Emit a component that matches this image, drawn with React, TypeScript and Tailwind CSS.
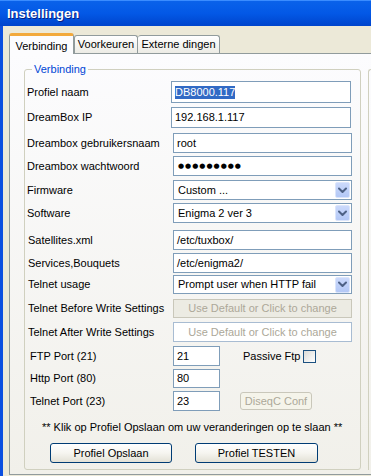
import type { ReactNode } from "react";

const FONT = "font-['Liberation_Sans',Arial,sans-serif]";

function Row({
  className,
  label,
  labelWidth = "w-[146px]",
  labelPad = "",
  children,
}: {
  className: string;
  label: string;
  labelWidth?: string;
  labelPad?: string;
  children: ReactNode;
}) {
  return (
    <div className={`flex items-center ${className}`}>
      <div className={`shrink-0 text-[11px] leading-none text-black ${labelWidth} ${labelPad}`}>
        {label}
      </div>
      {children}
    </div>
  );
}

function TextBox({ className, children }: { className: string; children?: ReactNode }) {
  return (
    <div
      className={`flex h-full items-center border border-[#7f9db9] bg-white pl-[3px] text-[11px] text-black ${className}`}
    >
      {children}
    </div>
  );
}

function Combo({ value }: { value: string }) {
  return (
    <div className="flex h-full w-[179px] items-center border border-[#7f9db9] bg-white pl-[4px] pr-[1px] text-[11px] text-black">
      <span className="flex-1">{value}</span>
      <span className="flex h-[16px] w-[15px] items-center justify-center rounded-[2px] border border-[#dbe5fb] bg-gradient-to-b from-[#cbd9fb] to-[#b3c8f6]">
        <ChevronIcon />
      </span>
    </div>
  );
}

function XpButton({ label, className }: { label: string; className: string }) {
  return (
    <button
      type="button"
      className={`flex h-[20px] items-center justify-center rounded-[3px] border border-[#003c74] bg-gradient-to-b from-white via-[#f6f5f0] to-[#e3e1d6] text-[11px] text-black ${className}`}
    >
      {label}
    </button>
  );
}

export default function App() {
  return (
    <div className={`h-[476px] w-[371px] overflow-hidden bg-[#ece9d8] ${FONT}`}>
      {/* title bar */}
      <div className="flex h-[26px] items-center border-t border-[#3a8cff] bg-gradient-to-b from-[#0a62ea] via-[#0358e6] to-[#0044cc] pl-[7px]">
        <span className="text-[13px] font-bold text-white [text-shadow:1px_1px_0_#0a1e80]">
          Instellingen
        </span>
      </div>

      <div className="flex h-[450px] border-l-[3px] border-[#0b4fe0]">
        <div className="flex flex-1 flex-col pl-[6px] pt-[7px]">
          {/* tabs */}
          <div className="relative z-10 flex h-[20px] items-end">
            <div className="-mb-px flex h-[21px] w-[65px] items-start justify-center rounded-t-[3px] border-x border-t-[3px] border-x-[#919b9c] border-t-[#f2a93c] bg-[#fcfcfe] pt-[2px] text-[11px] text-black">
              Verbinding
            </div>
            <div className="flex h-[18px] w-[64px] items-center justify-center rounded-t-[3px] border-x border-t border-[#919b9c] bg-gradient-to-b from-white to-[#ecebe5] text-[11px] text-black">
              Voorkeuren
            </div>
            <div className="flex h-[18px] w-[82px] items-center justify-center rounded-t-[3px] border-r border-t border-[#919b9c] bg-gradient-to-b from-white to-[#ecebe5] text-[11px] text-black">
              Externe dingen
            </div>
          </div>

          {/* tab page */}
          <div className="flex h-[422px] w-[420px] border border-[#919b9c] bg-gradient-to-b from-[#fcfcfe] to-[#f1f0ea] pb-[4px] pl-[14px] pt-[8px]">
            <fieldset className="h-[408px] w-[337px] shrink-0 rounded-[3px] border border-[#d0d0bf] pl-[2px] pr-[2px]">
              <legend className="ml-[5px] px-[2px] text-[11px] leading-[14px] text-[#0046d5]">
                Verbinding
              </legend>

              <Row className="mt-[5px] h-[22px]" label="Profiel naam" labelWidth="w-[144px]">
                <TextBox className="w-[180px]">
                  <span className="bg-[#316ac5] leading-[13px] text-white">DB8000.117</span>
                </TextBox>
              </Row>
              <Row className="mt-[4px] h-[21px]" label="DreamBox IP" labelWidth="w-[144px]">
                <TextBox className="w-[180px]">192.168.1.117</TextBox>
              </Row>
              <Row className="mt-[5px] h-[20px]" label="Dreambox gebruikersnaam">
                <TextBox className="w-[179px]">root</TextBox>
              </Row>
              <Row className="mt-[3px] h-[20px]" label="Dreambox wachtwoord">
                <TextBox className="w-[179px]">
                  <span className="pl-[1px] font-['DejaVu_Sans',sans-serif] text-[7px] tracking-[1px]">
                    ●●●●●●●●●
                  </span>
                </TextBox>
              </Row>
              <Row className="mt-[4px] h-[20px]" label="Firmware">
                <Combo value="Custom ..." />
              </Row>
              <Row className="mt-[3px] h-[20px]" label="Software">
                <Combo value="Enigma 2 ver 3" />
              </Row>
              <Row className="mt-[7px] h-[20px]" label="Satellites.xml" labelPad="pl-[1px]">
                <TextBox className="w-[179px]">/etc/tuxbox/</TextBox>
              </Row>
              <Row className="mt-[3px] h-[20px]" label="Services,Bouquets" labelPad="pl-[1px]">
                <TextBox className="w-[179px]">/etc/enigma2/</TextBox>
              </Row>
              <Row className="mt-[2px] h-[19px]" label="Telnet usage" labelPad="pl-[1px]">
                <Combo value="Prompt user when HTTP fail" />
              </Row>
              <Row className="mt-[5px] h-[19px]" label="Telnet Before Write Settings" labelPad="pl-[1px]">
                <div className="flex h-full w-[179px] items-center justify-center border border-[#c9c7ba] bg-[#ecebe3] text-[11px] text-[#aca899]">
                  Use Default or Click to change
                </div>
              </Row>
              <Row className="mt-[4px] h-[20px]" label="Telnet After Write Settings" labelPad="pl-[1px]">
                <div className="flex h-full w-[179px] items-center justify-center border border-[#a8bcd2] bg-white text-[11px] text-[#aca899]">
                  Use Default or Click to change
                </div>
              </Row>

              <Row className="mt-[4px] h-[20px]" label="FTP Port (21)" labelPad="pl-[3px]">
                <TextBox className="w-[47px]">21</TextBox>
                <span className="ml-[23px] text-[11px] text-black">Passive Ftp</span>
                <span className="ml-[3px] h-[13px] w-[13px] border border-[#1c5180] bg-gradient-to-br from-[#dcdcd7] to-white" />
              </Row>
              <Row className="mt-[3px] h-[19px]" label="Http Port (80)" labelPad="pl-[3px]">
                <TextBox className="w-[47px]">80</TextBox>
              </Row>
              <Row className="mt-[3px] h-[20px]" label="Telnet Port (23)" labelPad="pl-[3px]">
                <TextBox className="w-[47px]">23</TextBox>
                <div className="ml-[20px] flex h-[18px] w-[72px] items-center justify-center rounded-[3px] border border-[#c9c7ba] bg-[#f5f4ea] text-[11px] text-[#aca899]">
                  DiseqC Conf
                </div>
              </Row>

              <div className="mt-[9px] pl-[15px] text-[11px] leading-[14px] text-black">
                ** Klik op Profiel Opslaan om uw veranderingen op te slaan **
              </div>

              <div className="mt-[9px] flex pl-[23px]">
                <XpButton label="Profiel Opslaan" className="w-[122px]" />
                <XpButton label="Profiel TESTEN" className="ml-[23px] w-[123px]" />
              </div>
            </fieldset>

            <div className="ml-[7px] mt-[7px] h-[401px] w-[40px] shrink-0 rounded-tl-[3px] border-l border-t border-[#d0d0bf]" />
          </div>
        </div>
      </div>
    </div>
  );
}

function ChevronIcon() {
  return (
    <svg width="9" height="7" viewBox="0 0 9 7" aria-hidden="true">
      <path
        d="M1 1.5 4.5 5 8 1.5"
        fill="none"
        stroke="#4d6185"
        strokeWidth="2"
        strokeLinecap="round"
        strokeLinejoin="round"
      />
    </svg>
  );
}
